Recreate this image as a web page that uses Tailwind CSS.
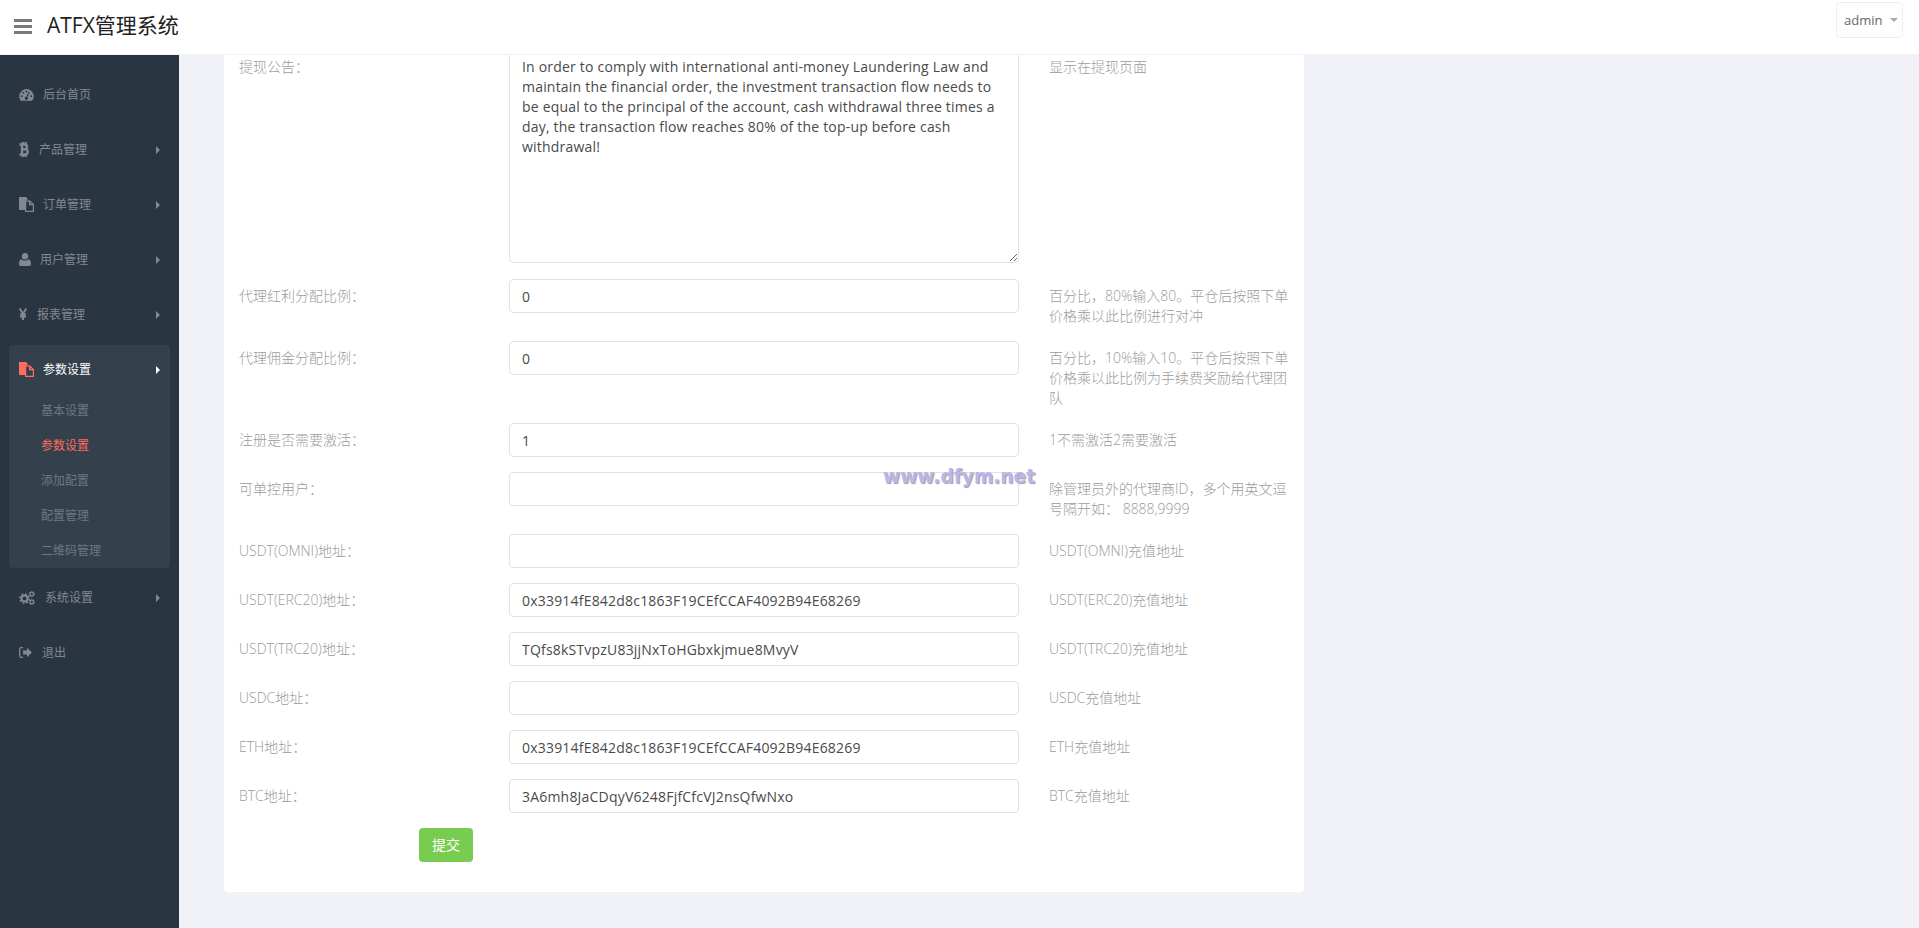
<!DOCTYPE html>
<html lang="zh-CN" class="h-full overflow-hidden">
  <head>
    <meta charset="UTF-8" />
    <title>ATFX管理系统</title>
    <script src="https://cdn.jsdelivr.net/npm/@tailwindcss/browser@4"></script>
  </head>
  <body class="relative h-full overflow-hidden bg-[#f1f2f7] text-[14px] leading-[20px] text-[#9b9b9b] font-light font-['Open_Sans','Noto_Sans_CJK_SC',sans-serif]">
    <!-- top bar -->
    <header class="h-[55px] bg-white border-b border-[#f1f2f7] flex items-center pl-[14px] pr-[16px]">
      <div class="w-[18px] flex flex-col gap-[3px] -mt-[2px]">
        <span class="h-[3px] bg-[#797979]"></span>
        <span class="h-[3px] bg-[#797979]"></span>
        <span class="h-[3px] bg-[#797979]"></span>
      </div>
      <a class="ml-[15px] text-[21px] font-normal text-[#222] -mt-[4px]">ATFX管理系统</a>
      <button class="ml-auto -mt-[14px] h-[36px] w-[67px] border border-[#eeeeee] rounded-[4px] flex items-center pl-[7px] text-[13px] font-normal text-[#666]">
        admin
        <span class="ml-[8px] w-0 h-0 border-x-[4px] border-x-transparent border-t-[4px] border-t-[#aaa]"></span>
      </button>
    </header>

    <div class="flex h-[873px]">
      <!-- side menu -->
      <nav class="w-[179px] shrink-0 bg-[#2a3542] px-[9px] pt-[12px] text-[12px] font-normal text-[#828890]">
        <a class="h-[55px] pl-[10px] pr-[10px] flex items-center gap-[9px]">
          <svg class="w-[15px] h-[13px]" viewBox="0 0 16 13.5"><path fill="#828890" d="M8 1A7.7 7.7 0 0 0 .3 8.7c0 1.8.6 3.400 1.600 4.600h12.200c1-1.200 1.600-2.800 1.600-4.600A7.700 7.700 0 0 0 8 1z" /><g fill="#2a3542"><circle cx="3" cy="8.500" r="1" /><circle cx="4.500" cy="5" r="1" /><circle cx="8" cy="3.500" r="1" /><circle cx="13" cy="8.500" r="1" /><path d="M11.500 4.200 9 9.500a1.700 1.700 0 1 1-1.200-.4l2.700-5.400z" /></g></svg>
          <span>后台首页</span>
        </a>
        <a class="h-[55px] pl-[10px] pr-[10px] flex items-center gap-[10px]">
          <svg class="w-[10px] h-[15px]" viewBox="0 0 10 15"><path fill="none" stroke="#828890" stroke-width="2.400" d="M.5 2.500h5.300c3 0 3 4.700 0 4.700H3M3 7.200h3.300c3.200 0 3.200 5.300 0 5.300H.5M3 2.500v10M3.700 0v2.500M6.700 0v2.500M3.700 12.500V15M6.700 12.500V15" /></svg>
          <span>产品管理</span>
          <span class="ml-auto w-0 h-0 border-y-[4px] border-y-transparent border-l-[4px] border-l-[#828890]"></span>
        </a>
        <a class="h-[55px] pl-[10px] pr-[10px] flex items-center gap-[9px]">
          <svg class="w-[15px] h-[15px]" viewBox="0 0 15 15"><path fill="#828890" d="M0 0h7l1.500 1.500V3.500H6v9.500H0z" /><path fill="none" stroke="#828890" stroke-width="1.200" d="M6.600 4.100h4.400l3.400 3.400v6.900H6.600z" /><path fill="#828890" d="M10 4h1.500v3h3v1.200H10z" /></svg>
          <span>订单管理</span>
          <span class="ml-auto w-0 h-0 border-y-[4px] border-y-transparent border-l-[4px] border-l-[#828890]"></span>
        </a>
        <a class="h-[55px] pl-[10px] pr-[10px] flex items-center gap-[9px]">
          <svg class="w-[12px] h-[13px]" viewBox="0 0 12 13"><circle cx="6" cy="3.300" r="3.200" fill="#828890" /><path fill="#828890" d="M2.500 6.200C3.400 7 4.600 7.500 6 7.500s2.600-.5 3.500-1.300C11.200 6.600 12 8.500 12 10.800c0 1.400-.9 2.200-2 2.200H2c-1.100 0-2-.8-2-2.200 0-2.300.8-4.200 2.500-4.600z" /></svg>
          <span>用户管理</span>
          <span class="ml-auto w-0 h-0 border-y-[4px] border-y-transparent border-l-[4px] border-l-[#828890]"></span>
        </a>
        <a class="h-[55px] pl-[10px] pr-[10px] flex items-center gap-[10px]">
          <svg class="w-[8px] h-[12px] -mt-[2px]" viewBox="0 0 8 12"><path fill="none" stroke="#828890" stroke-width="1.900" d="M.7.500 4 5.800 7.300.500M4 5.800V12M1 6.500h6M1 8.800h6" /></svg>
          <span>报表管理</span>
          <span class="ml-auto w-0 h-0 border-y-[4px] border-y-transparent border-l-[4px] border-l-[#828890]"></span>
        </a>

        <!-- open group -->
        <div class="mt-[3px] bg-[#35404d] rounded-[4px]">
          <a class="h-[48px] pt-[1px] pl-[10px] pr-[10px] flex items-center gap-[9px] text-white">
            <svg class="w-[15px] h-[15px]" viewBox="0 0 15 15"><path fill="#ff6c60" d="M0 0h7l1.500 1.500V3.500H6v9.500H0z" /><path fill="none" stroke="#ff6c60" stroke-width="1.200" d="M6.600 4.100h4.400l3.400 3.400v6.900H6.600z" /><path fill="#ff6c60" d="M10 4h1.500v3h3v1.200H10z" /></svg>
            <span>参数设置</span>
            <span class="ml-auto w-0 h-0 border-y-[4px] border-y-transparent border-l-[4px] border-l-white"></span>
          </a>
          <ul class="text-[#6d7883]">
            <li class="h-[35px] pl-[32px] flex items-center">基本设置</li>
            <li class="h-[35px] pl-[32px] flex items-center text-[#ff6c60]">参数设置</li>
            <li class="h-[35px] pl-[32px] flex items-center">添加配置</li>
            <li class="h-[35px] pl-[32px] flex items-center">配置管理</li>
            <li class="h-[35px] pl-[32px] flex items-center">二维码管理</li>
          </ul>
        </div>

        <a class="mt-[2px] h-[55px] pl-[10px] pr-[10px] flex items-center gap-[10px]">
          <svg class="w-[16px] h-[14px]" viewBox="0 0 16 14"><circle cx="5.500" cy="7.500" r="3" fill="none" stroke="#828890" stroke-width="2" /><circle cx="5.500" cy="7.500" r="4.600" fill="none" stroke="#828890" stroke-width="1.600" stroke-dasharray="1.800 1.800" /><circle cx="12.800" cy="3" r="1.800" fill="none" stroke="#828890" stroke-width="1.300" /><circle cx="12.800" cy="3" r="2.800" fill="none" stroke="#828890" stroke-width="1" stroke-dasharray="1.200 1.200" /><circle cx="12.800" cy="11" r="1.800" fill="none" stroke="#828890" stroke-width="1.300" /><circle cx="12.800" cy="11" r="2.800" fill="none" stroke="#828890" stroke-width="1" stroke-dasharray="1.200 1.200" /></svg>
          <span>系统设置</span>
          <span class="ml-auto w-0 h-0 border-y-[4px] border-y-transparent border-l-[4px] border-l-[#828890]"></span>
        </a>
        <a class="h-[55px] pl-[10px] pr-[10px] flex items-center gap-[10px]">
          <svg class="w-[13px] h-[11px]" viewBox="0 0 13 11"><path fill="none" stroke="#828890" stroke-width="1.300" d="M4 .7H2A1.400 1.400 0 0 0 .7 2v7A1.400 1.400 0 0 0 2 10.300h2" /><path fill="#828890" d="M4 3.500h4V.8l5 4.700-5 4.700V7.500H4z" /></svg>
          <span>退出</span>
        </a>
      </nav>

      <!-- form card -->
      <main class="flex-1 pl-[45px]">
        <form class="w-[1080px] h-[837px] bg-white rounded-b-[4px] overflow-hidden">
          <div class="-mt-[5px] mb-[16px] flex items-start">
            <label class="w-[270px] pl-[15px] pt-[7px]">提现公告：</label>
            <textarea class="ml-[15px] w-[510px] h-[213px] border border-[#e2e2e4] rounded-[4px] px-[12px] py-[6px] font-normal tracking-[0.2px] text-[#4a4a4a] outline-none">In order to comply with international anti-money Laundering Law and maintain the financial order, the investment transaction flow needs to be equal to the principal of the account, cash withdrawal three times a day, the transaction flow reaches 80% of the top-up before cash withdrawal!</textarea>
            <p class="ml-[30px] w-[240px] pt-[7px]">显示在提现页面</p>
          </div>
          <div class="mb-[15px] flex items-start">
            <label class="w-[270px] pl-[15px] pt-[7px]">代理红利分配比例：</label>
            <input class="ml-[15px] w-[510px] h-[34px] border border-[#e2e2e4] rounded-[4px] px-[12px] font-normal tracking-[0.2px] text-[#4a4a4a] outline-none" value="0" />
            <p class="ml-[30px] w-[240px] h-[47px] pt-[7px]">百分比，80%输入80。平仓后按照下单价格乘以此比例进行对冲</p>
          </div>
          <div class="mb-[15px] flex items-start">
            <label class="w-[270px] pl-[15px] pt-[7px]">代理佣金分配比例：</label>
            <input class="ml-[15px] w-[510px] h-[34px] border border-[#e2e2e4] rounded-[4px] px-[12px] font-normal tracking-[0.2px] text-[#4a4a4a] outline-none" value="0" />
            <p class="ml-[30px] w-[240px] h-[67px] pt-[7px]">百分比，10%输入10。平仓后按照下单价格乘以此比例为手续费奖励给代理团队</p>
          </div>
          <div class="mb-[15px] flex items-start">
            <label class="w-[270px] pl-[15px] pt-[7px]">注册是否需要激活：</label>
            <input class="ml-[15px] w-[510px] h-[34px] border border-[#e2e2e4] rounded-[4px] px-[12px] font-normal tracking-[0.2px] text-[#4a4a4a] outline-none" value="1" />
            <p class="ml-[30px] w-[240px] pt-[7px]">1不需激活2需要激活</p>
          </div>
          <div class="mb-[15px] flex items-start">
            <label class="w-[270px] pl-[15px] pt-[7px]">可单控用户：</label>
            <input class="ml-[15px] w-[510px] h-[34px] border border-[#e2e2e4] rounded-[4px] px-[12px] font-normal tracking-[0.2px] text-[#4a4a4a] outline-none" value="" />
            <p class="ml-[30px] w-[240px] h-[47px] pt-[7px]">除管理员外的代理商ID，多个用英文逗号隔开如： 8888,9999</p>
          </div>
          <div class="mb-[15px] flex items-start">
            <label class="w-[270px] pl-[15px] pt-[7px]">USDT(OMNI)地址：</label>
            <input class="ml-[15px] w-[510px] h-[34px] border border-[#e2e2e4] rounded-[4px] px-[12px] font-normal tracking-[0.2px] text-[#4a4a4a] outline-none" value="" />
            <p class="ml-[30px] w-[240px] pt-[7px]">USDT(OMNI)充值地址</p>
          </div>
          <div class="mb-[15px] flex items-start">
            <label class="w-[270px] pl-[15px] pt-[7px]">USDT(ERC20)地址：</label>
            <input class="ml-[15px] w-[510px] h-[34px] border border-[#e2e2e4] rounded-[4px] px-[12px] font-normal tracking-[0.2px] text-[#4a4a4a] outline-none" value="0x33914fE842d8c1863F19CEfCCAF4092B94E68269" />
            <p class="ml-[30px] w-[240px] pt-[7px]">USDT(ERC20)充值地址</p>
          </div>
          <div class="mb-[15px] flex items-start">
            <label class="w-[270px] pl-[15px] pt-[7px]">USDT(TRC20)地址：</label>
            <input class="ml-[15px] w-[510px] h-[34px] border border-[#e2e2e4] rounded-[4px] px-[12px] font-normal tracking-[0.2px] text-[#4a4a4a] outline-none" value="TQfs8kSTvpzU83jjNxToHGbxkjmue8MvyV" />
            <p class="ml-[30px] w-[240px] pt-[7px]">USDT(TRC20)充值地址</p>
          </div>
          <div class="mb-[15px] flex items-start">
            <label class="w-[270px] pl-[15px] pt-[7px]">USDC地址：</label>
            <input class="ml-[15px] w-[510px] h-[34px] border border-[#e2e2e4] rounded-[4px] px-[12px] font-normal tracking-[0.2px] text-[#4a4a4a] outline-none" value="" />
            <p class="ml-[30px] w-[240px] pt-[7px]">USDC充值地址</p>
          </div>
          <div class="mb-[15px] flex items-start">
            <label class="w-[270px] pl-[15px] pt-[7px]">ETH地址：</label>
            <input class="ml-[15px] w-[510px] h-[34px] border border-[#e2e2e4] rounded-[4px] px-[12px] font-normal tracking-[0.2px] text-[#4a4a4a] outline-none" value="0x33914fE842d8c1863F19CEfCCAF4092B94E68269" />
            <p class="ml-[30px] w-[240px] pt-[7px]">ETH充值地址</p>
          </div>
          <div class="mb-[15px] flex items-start">
            <label class="w-[270px] pl-[15px] pt-[7px]">BTC地址：</label>
            <input class="ml-[15px] w-[510px] h-[34px] border border-[#e2e2e4] rounded-[4px] px-[12px] font-normal tracking-[0.2px] text-[#4a4a4a] outline-none" value="3A6mh8JaCDqyV6248FjfCfcVJ2nsQfwNxo" />
            <p class="ml-[30px] w-[240px] pt-[7px]">BTC充值地址</p>
          </div>
          <button type="button" class="ml-[195px] w-[54px] h-[34px] rounded-[4px] bg-[#78cd51] font-normal text-white">提交</button>
        </form>
      </main>
    </div>

    <!-- watermark -->
    <div class="absolute left-[883px] top-[463px] text-[18.6px] leading-[28px] font-bold whitespace-nowrap text-[#b9b7ea] font-['DejaVu_Sans',sans-serif] [text-shadow:1px_1px_1px_#9a9aaa]">www.dfym.net</div>
  </body>
</html>
